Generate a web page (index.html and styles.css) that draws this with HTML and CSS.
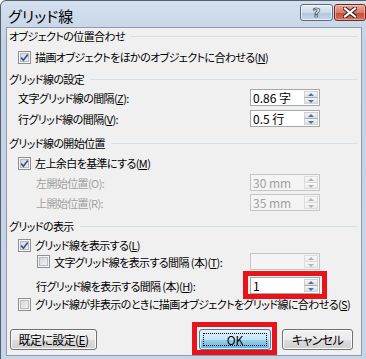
FILE: index.html
```html
<!DOCTYPE html>
<html lang="ja">
<head>
<meta charset="utf-8">
<title>グリッド線</title>
<link rel="stylesheet" href="styles.css">
</head>
<body>
<div class="window">
  <div class="titlebar">
    <span class="title">グリッド線</span>
    <div class="caption-btns">
      <span class="cap help">?</span>
      <span class="cap close">
        <svg width="14" height="11" viewBox="0 0 14 11"><path d="M2 1.5 L12 9.5 M12 1.5 L2 9.5" stroke="#3b1f1f" stroke-width="4.2" stroke-linecap="square"/><path d="M2 1.5 L12 9.5 M12 1.5 L2 9.5" stroke="#ffffff" stroke-width="2.2" stroke-linecap="square"/></svg>
      </span>
    </div>
  </div>
  <div class="client">
    <div class="header"><span>オブジェクトの位置合わせ</span><i class="rule"></i></div>
    <div class="check-row m5"><span class="cb on"><svg width="9" height="9" viewBox="0 0 9 9"><path d="M1.2 4.6 L3.4 7.2 L7.8 1.4" fill="none" stroke="#3d4f93" stroke-width="1.7"/></svg></span><span>描画オブジェクトをほかのオブジェクトに合わせる(<u>N</u>)</span></div>

    <div class="header m6"><span>グリッド線の設定</span><i class="rule"></i></div>
    <div class="field m2"><span>文字グリッド線の間隔(<u>Z</u>):</span>
      <span class="spin"><span class="val">0.86 字</span><span class="arrows"><span class="sb up"></span><span class="sb down"></span></span></span></div>
    <div class="field m4"><span>行グリッド線の間隔(<u>V</u>):</span>
      <span class="spin"><span class="val">0.5 行</span><span class="arrows"><span class="sb up"></span><span class="sb down"></span></span></span></div>

    <div class="header m8"><span>グリッド線の開始位置</span><i class="rule"></i></div>
    <div class="check-row m4"><span class="cb on"><svg width="9" height="9" viewBox="0 0 9 9"><path d="M1.2 4.6 L3.4 7.2 L7.8 1.4" fill="none" stroke="#3d4f93" stroke-width="1.7"/></svg></span><span>左上余白を基準にする(<u>M</u>)</span></div>
    <div class="field indent disabled m3"><span>左開始位置(O):</span>
      <span class="spin"><span class="val">30 mm</span><span class="arrows"><span class="sb up"></span><span class="sb down"></span></span></span></div>
    <div class="field indent disabled m3"><span>上開始位置(R):</span>
      <span class="spin"><span class="val">35 mm</span><span class="arrows"><span class="sb up"></span><span class="sb down"></span></span></span></div>

    <div class="header m7"><span>グリッドの表示</span><i class="rule"></i></div>
    <div class="check-row m3"><span class="cb on"><svg width="9" height="9" viewBox="0 0 9 9"><path d="M1.2 4.6 L3.4 7.2 L7.8 1.4" fill="none" stroke="#3d4f93" stroke-width="1.7"/></svg></span><span>グリッド線を表示する(<u>L</u>)</span></div>
    <div class="field check-field"><span class="cb"></span><span class="lbl">文字グリッド線を表示する間隔 (本)(<u>T</u>):</span>
      <span class="spin disabled"><span class="val"></span><span class="arrows"><span class="sb up"></span><span class="sb down"></span></span></span></div>
    <div class="field indent m7"><span>行グリッド線を表示する間隔 (本)(<u>H</u>):</span>
      <span class="mark mark-spin"><span class="spin"><span class="val">1</span><span class="arrows"><span class="sb up"></span><span class="sb down"></span></span></span></span></div>
    <div class="check-row m2"><span class="cb"></span><span>グリッド線が非表示のときに描画オブジェクトをグリッド線に合わせる(<u>S</u>)</span></div>

    <div class="buttons">
      <span class="btn wide">既定に設定(<u>E</u>)</span>
      <span class="mark mark-ok"><span class="btn default"><span class="focus">OK</span></span></span>
      <span class="btn">キャンセル</span>
    </div>
  </div>
</div>
</body>
</html>
```
FILE: styles.css
```css
html, body {
  margin: 0;
  padding: 0;
  overflow: hidden;
  background: #ffffff;
}
body {
  width: 366px;
  height: 359px;
  font-family: "Noto Sans CJK JP", "Noto Sans", sans-serif;
  font-size: 11px;
  letter-spacing: -0.6px;
  font-feature-settings: "palt";
  color: #000;
  white-space: nowrap;
}
u { text-decoration: underline; text-underline-offset: 1px; }

.window {
  width: 372px;
  height: 366px;
  box-sizing: border-box;
  border: 1px solid #55606e;
  border-radius: 6px 6px 0 0;
  background: linear-gradient(#d4e0ee, #c3d3e6 40px, #c6d5e7);
  padding: 0 0 0 5px;
}
.titlebar {
  height: 26px;
  display: flex;
  align-items: center;
  justify-content: space-between;
  padding-left: 2px;
}
.title {
  font-size: 15px;
  line-height: 16px;
  margin-top: 3px;
  letter-spacing: 0.2px;
}
.caption-btns {
  display: flex;
  align-self: flex-start;
  margin-top: 3px;
  margin-right: 5px;
  gap: 1px;
}
.cap {
  width: 32px;
  height: 17px;
  box-sizing: border-box;
  border: 1px solid #5b6b80;
  border-radius: 3px;
  display: flex;
  align-items: center;
  justify-content: center;
  letter-spacing: 0;
}
.help {
  width: 33px;
  background: linear-gradient(#e6eef7 0%, #cbd9e9 50%, #b3c6dc 51%, #c6d6e8 100%);
  box-shadow: inset 0 0 0 1px rgba(255,255,255,0.6);
  color: #fff;
  font-family: "DejaVu Sans", sans-serif;
  font-weight: bold;
  font-size: 13px;
  line-height: 13px;
  -webkit-text-stroke: 0.6px #33404f;
  text-shadow: 0 0 1px #33404f;
}
.close {
  border-color: #6e2a22;
  background: linear-gradient(#e9a99b 0%, #d77c6a 50%, #c64a35 51%, #d5735c 100%);
  box-shadow: inset 0 0 0 1px rgba(255,220,210,0.5);
}

.client {
  width: 354px;
  height: 327px;
  border: 1px solid #8c9bad;
  background: #f0f0f0;
  display: flex;
  flex-direction: column;
}

.header {
  height: 16px;
  display: flex;
  align-items: center;
  padding-left: 2px;
  padding-right: 4px;
  line-height: 16px;
}
.rule {
  flex: 1;
  height: 1px;
  background: #d5dfe6;
  margin-left: 6px;
  margin-top: 1px;
}

.check-row {
  height: 16px;
  display: flex;
  align-items: center;
  padding-left: 11px;
  gap: 4px;
  line-height: 16px;
}

.cb {
  width: 13px;
  height: 13px;
  box-sizing: border-box;
  border: 1px solid #8e8f8f;
  background: linear-gradient(135deg, #cfd1d4, #f6f6f6);
  box-shadow: inset 0 0 0 1px #f4f4f4, inset 0 0 0 2px #b8bcc2;
  display: flex;
  align-items: center;
  justify-content: center;
  flex: none;
}
.cb svg { display: block; }

.field {
  height: 17px;
  display: flex;
  align-items: center;
  padding-left: 11px;
  padding-right: 41px;
  line-height: 16px;
}
.field .spin, .field .mark { margin-left: auto; flex: none; }
.field.indent { padding-left: 29px; }
.check-field { padding-left: 30px; gap: 4px; }
.disabled { color: #a0a0a0; }

.spin {
  width: 70px;
  height: 17px;
  box-sizing: border-box;
  border: 1px solid #a4a7ab;
  background: #fff;
  display: flex;
  color: #000;
}
.spin .val {
  flex: 1;
  padding-left: 2px;
  font-size: 12px;
  letter-spacing: 0;
  line-height: 15px;
}
.arrows {
  width: 14px;
  display: flex;
  flex-direction: column;
  padding: 1px 1px 1px 0;
  box-sizing: content-box;
}
.sb {
  flex: 1;
  position: relative;
  background: linear-gradient(#f5f5f5, #dedede);
  border: 1px solid #cfd1d4;
}
.sb.down { border-top-color: #a9acb0; }
.sb.up { border-bottom: none; }
.sb::after {
  content: "";
  position: absolute;
  left: 50%;
  top: 50%;
  width: 0;
  height: 0;
  margin-left: -3px;
  border-left: 3px solid transparent;
  border-right: 3px solid transparent;
}
.sb.up::after { border-bottom: 3px solid #4a72b0; margin-top: -2px; }
.sb.down::after { border-top: 3px solid #4a72b0; margin-top: -1px; }

.disabled .spin, .spin.disabled {
  background: #f4f4f4;
  border-color: #c3c5c8;
  color: #a0a0a0;
}
.disabled .sb, .spin.disabled .sb { background: linear-gradient(#f8f8f8, #ececec); border-color: #dcdcdc; }
.disabled .sb.up::after, .spin.disabled .sb.up::after { border-bottom-color: #b4b4b4; }
.disabled .sb.down::after, .spin.disabled .sb.down::after { border-top-color: #b4b4b4; }

.mark {
  display: flex;
  border: 5px solid #e8141c;
}
.mark-spin {
  padding: 1px 2px 0 2px;
  margin: -6px -7px -5px -7px;
}
.mark-ok {
  padding: 2px 1px 0 2px;
  margin: -7px 0 -5px auto;
}

.buttons {
  margin-top: 17px;
  height: 21px;
  display: flex;
  align-items: center;
  padding-left: 3px;
  padding-right: 8px;
}
.btn {
  height: 21px;
  width: 71px;
  box-sizing: border-box;
  border: 1px solid #707070;
  border-radius: 3px;
  background: linear-gradient(#f2f2f2 0%, #ebebeb 50%, #dddddd 51%, #cfcfcf 100%);
  box-shadow: inset 0 0 0 1px #fbfbfb;
  display: flex;
  align-items: center;
  justify-content: center;
  line-height: 16px;
  font-size: 12px;
}
.btn.wide { width: 87px; }
.btn.default {
  width: 72px;
  border-color: #3c7fb1;
  background: linear-gradient(#e5f4fc 0%, #c4e5f6 50%, #98d1ef 51%, #68b3db 100%);
  box-shadow: inset 0 0 0 1px #e0f2fc;
}
.mark-ok + .btn { margin-left: 5px; }
.focus {
  align-self: stretch;
  flex: 1;
  margin: 3px;
  border: 1px dotted #000;
  display: flex;
  align-items: center;
  justify-content: center;
  line-height: 11px;
  letter-spacing: 0;
}

.m2 { margin-top: 2px; }
.m3 { margin-top: 3px; }
.m4 { margin-top: 4px; }
.m5 { margin-top: 5px; }
.m6 { margin-top: 6px; }
.m7 { margin-top: 7px; }
.m8 { margin-top: 8px; }
```
